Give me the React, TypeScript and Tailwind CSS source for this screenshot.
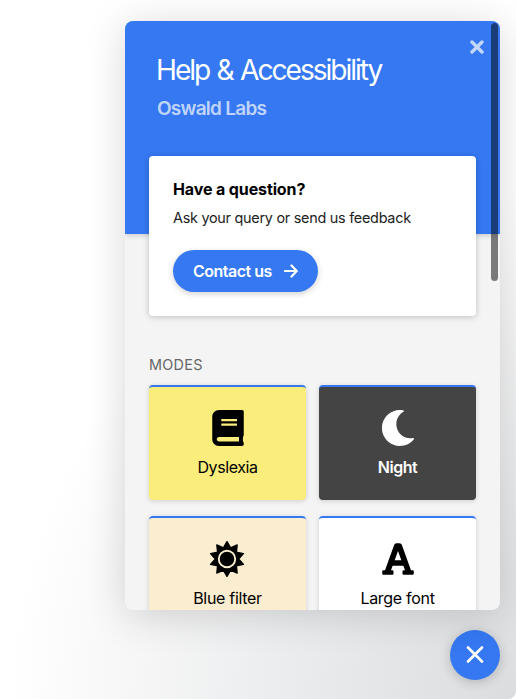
import type { ReactNode } from "react";
import { FaBook, FaFont, FaMoon } from "react-icons/fa";

const SUN_POINTS = Array.from({ length: 20 }, (_, i) => {
  const r = i % 2 === 0 ? 17.3 : 11.6;
  const a = (i * Math.PI) / 10;
  return `${(18 + r * Math.sin(a)).toFixed(2)},${(18 - r * Math.cos(a)).toFixed(2)}`;
}).join(" ");

function SunIcon() {
  return (
    <svg viewBox="0 0 36 36" className="mr-[1px] size-9" fill="none">
      <polygon points={SUN_POINTS} fill="currentColor" stroke="currentColor" strokeWidth="1.4" strokeLinejoin="round" />
      <circle cx="18" cy="18" r="8.2" stroke="#fbedcf" strokeWidth="1.9" />
    </svg>
  );
}

function ArrowIcon() {
  return (
    <svg viewBox="0 0 14 14" className="h-[14px] w-[14px]" fill="none" stroke="currentColor" strokeWidth="2.2" strokeLinecap="round" strokeLinejoin="round">
      <path d="M1 7h11.5M7.5 1.5L12.8 7l-5.3 5.5" />
    </svg>
  );
}

function Tile({ tone, label, children }: { tone: string; label: ReactNode; children: ReactNode }) {
  return (
    <div className={`flex h-[115px] flex-col items-center rounded-[4px] border-t-2 border-[#3578f2] pt-[23px] shadow-[0_1px_5px_rgba(0,0,0,0.16)] ${tone}`}>
      <div className="flex h-9 items-center justify-center">{children}</div>
      <div className="mt-[9px] text-base leading-6">{label}</div>
    </div>
  );
}

export default function App() {
  return (
    <div className="h-[699px] w-[516px] overflow-hidden bg-white font-['Inter','Liberation_Sans',sans-serif] text-black">
      <div className="flex h-full flex-col items-end rounded-br-[8px] bg-[radial-gradient(509px_509px_at_bottom_right,rgba(29,39,54,0.16),rgba(29,39,54,0))] pr-4 pt-[21px]">
        <main className="relative h-[589px] w-[375px] overflow-hidden rounded-[8px] bg-[#f4f4f4] shadow-[0_5px_40px_rgba(0,0,0,0.16)]">
          <header className="h-[213px] bg-[#3578f2] pl-8 pt-[31px] shadow-[0_1px_6px_rgba(0,0,0,0.2)]">
            <h1 className="text-[28.2px] leading-[36px] font-normal whitespace-nowrap text-white"><span className="-ml-px tracking-[-2.06px] [word-spacing:1.5px]">Help &amp; Accessibility</span></h1>
            <p className="mt-[9px] text-[19px] leading-6 font-semibold text-white/70"><span className="tracking-[-0.75px]">Oswald Labs</span></p>
          </header>
          <section className="relative mx-6 -mt-[78px] h-[160px] rounded-[4px] bg-white px-6 pt-[21px] shadow-[0_1px_6px_rgba(0,0,0,0.22)]">
            <h2 className="text-base leading-6 font-bold"><span className="tracking-[-0.12px]">Have a question?</span></h2>
            <p className="mt-[6px] text-[14.4px] leading-[22px] whitespace-nowrap text-[#222]"><span className="tracking-[-0.26px]">Ask your query or send us feedback</span></p>
            <button className="mt-[21px] flex h-[42px] w-[145px] items-center justify-between rounded-full bg-[#3578f2] pr-5 pl-5 text-base font-semibold text-white shadow-[0_2px_6px_rgba(0,0,0,0.18)]">
              <span className="tracking-[-0.5px] whitespace-nowrap">Contact us</span>
              <ArrowIcon />
            </button>
          </section>
          <h3 className="mt-[38px] ml-6 text-[14.4px] leading-[22px] text-[#666]"><span className="tracking-[0.3px]">MODES</span></h3>
          <div className="mx-6 mt-[9px] grid grid-cols-2 gap-x-[13px] gap-y-4">
            <Tile tone="bg-[#fbed7b]" label={<span className="tracking-[-0.42px]">Dyslexia</span>}>
              <FaBook className="h-9 w-8" />
            </Tile>
            <Tile tone="bg-[#444] text-white" label={<span className="font-semibold tracking-[-0.5px]">Night</span>}>
              <FaMoon className="size-9" />
            </Tile>
            <Tile tone="bg-[#fbedcf]" label={<span className="tracking-[-0.3px]">Blue filter</span>}>
              <SunIcon />
            </Tile>
            <Tile tone="bg-white" label={<span className="tracking-[-0.3px]">Large font</span>}>
              <FaFont className="size-9" />
            </Tile>
          </div>
          <button aria-label="Close" className="absolute top-[19px] right-4 text-white/70">
            <svg viewBox="0 0 14 14" className="size-[14px]" stroke="currentColor" strokeWidth="3.4" strokeLinecap="round">
              <path d="M2 2l10 10M12 2L2 12" />
            </svg>
          </button>
          <div className="absolute top-[2px] right-[2px] h-[258px] w-[7px] rounded-full bg-black/50" />
        </main>
        <button aria-label="Close help" className="mt-5 flex size-[50px] items-center justify-center rounded-full bg-[#3578f2] text-white shadow-[0_2px_12px_rgba(0,0,0,0.2)]">
          <svg viewBox="0 0 18 18" className="size-[18px]" stroke="currentColor" strokeWidth="2.6" strokeLinecap="round">
            <path d="M2 1.5l14 14M16 1.5l-14 14" />
          </svg>
        </button>
      </div>
    </div>
  );
}
